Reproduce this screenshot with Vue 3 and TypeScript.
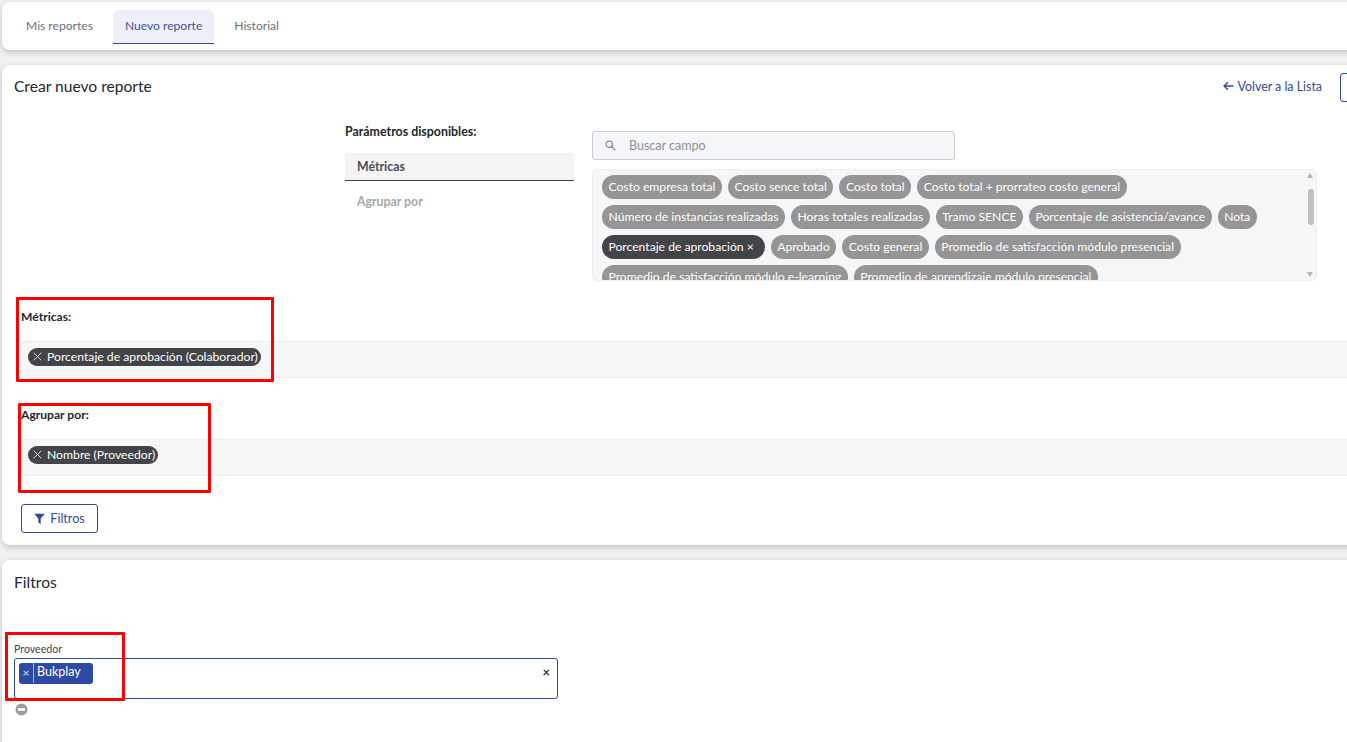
<script setup lang="ts">
const tabs: string[] = ['Mis reportes', 'Nuevo reporte', 'Historial']
const fields: { label: string; active?: boolean }[] = [
  { label: 'Costo empresa total' },
  { label: 'Costo sence total' },
  { label: 'Costo total' },
  { label: 'Costo total + prorrateo costo general' },
  { label: 'Número de instancias realizadas' },
  { label: 'Horas totales realizadas' },
  { label: 'Tramo SENCE' },
  { label: 'Porcentaje de asistencia/avance' },
  { label: 'Nota' },
  { label: 'Porcentaje de aprobación ×', active: true },
  { label: 'Aprobado' },
  { label: 'Costo general' },
  { label: 'Promedio de satisfacción módulo presencial' },
  { label: 'Promedio de satisfacción módulo e-learning' },
  { label: 'Promedio de aprendizaje módulo presencial' }
]
</script>

<template>
  <div class="page">
    <section class="card tabs-card">
      <a
        v-for="t in tabs"
        :key="t"
        class="tab"
        :class="{ 'tab-on': t === 'Nuevo reporte' }"
      >{{ t }}</a>
    </section>

    <section class="card main-card">
      <header class="head">
        <h2 class="title">Crear nuevo reporte</h2>
        <div class="head-actions">
          <a class="back">
            <svg width="11" height="10" viewBox="0 0 11 10" fill="none" stroke="#2e4aa5" stroke-width="1.4">
              <path d="M10.5 5H1.2M4.8 1.2 1.1 5l3.7 3.8" />
            </svg>
            Volver a la Lista
          </a>
          <span class="save"></span>
        </div>
      </header>

      <div class="params">
        <div class="params-nav">
          <div class="params-label">Parámetros disponibles:</div>
          <div class="nav-item nav-on">Métricas</div>
          <div class="nav-item">Agrupar por</div>
        </div>
        <div class="params-body">
          <div class="search">
            <svg width="11" height="11" viewBox="0 0 11 11" fill="none" stroke="#8b9097" stroke-width="1.3">
              <circle cx="4.3" cy="4.3" r="3.2" />
              <path d="M6.8 6.8 10.3 10.3" />
            </svg>
            <span>Buscar campo</span>
          </div>
          <div class="fields">
            <span
              v-for="f in fields"
              :key="f.label"
              class="field"
              :class="{ 'field-on': f.active }"
            >{{ f.label }}</span>
            <div class="scrollbar">
              <i class="arrow arrow-up"></i>
              <i class="thumb"></i>
              <i class="arrow arrow-down"></i>
            </div>
          </div>
        </div>
      </div>

      <div class="group group-first">
        <div class="group-label">Métricas:</div>
        <div class="bar">
          <span class="pill"><svg class="x" width="9" height="9" viewBox="0 0 9 9" stroke="#d8d8d8" stroke-width="1"><path d="M.7.7l7.6 7.6M8.3.7.7 8.3" /></svg>Porcentaje de aprobación (Colaborador)</span>
        </div>
      </div>
      <div class="group">
        <div class="group-label">Agrupar por:</div>
        <div class="bar">
          <span class="pill"><svg class="x" width="9" height="9" viewBox="0 0 9 9" stroke="#d8d8d8" stroke-width="1"><path d="M.7.7l7.6 7.6M8.3.7.7 8.3" /></svg>Nombre (Proveedor)</span>
        </div>
      </div>

      <button class="filter-btn">
        <svg width="11" height="11" viewBox="0 0 11 11" fill="#2e4aa5"><path d="M.3.8h10.4L6.7 5.4V11L4.3 9.4v-4z" /></svg>
        Filtros
      </button>
    </section>

    <section class="card filter-card">
      <h2 class="title">Filtros</h2>
      <label class="select-label">Proveedor</label>
      <div class="select">
        <span class="tag"><b class="tag-x">×</b><span class="tag-text">Bukplay</span></span>
        <span class="clear">×</span>
      </div>
      <svg class="minus" width="13" height="13" viewBox="0 0 13 13">
        <circle cx="6.5" cy="6.5" r="6" fill="#9a9ea3" />
        <rect x="3" y="5.2" width="7" height="2.6" fill="#fff" />
      </svg>
    </section>

    <div class="mark mark-a"></div>
    <div class="mark mark-b"></div>
    <div class="mark mark-c"></div>
  </div>
</template>

<style scoped>
.page {
  position: relative;
  width: 1347px;
  height: 742px;
  overflow: hidden;
  background: #f1f2f3;
  padding: 2px 0 0 2px;
  box-sizing: border-box;
  font-family: Lato, "Noto Sans", sans-serif;
  color: #2b3038;
}
.card {
  background: #fff;
  border-radius: 8px;
  box-shadow: 0 2px 6px rgba(0, 0, 0, 0.22);
  width: 1420px;
  box-sizing: border-box;
}
.tabs-card {
  height: 48px;
  display: flex;
  gap: 8px;
  padding: 8px 0 0 12px;
}
.tab {
  height: 34px;
  box-sizing: border-box;
  padding: 0 12px 3px;
  display: flex;
  align-items: center;
  font-size: 12.1px;
  color: #6c7077;
  border-radius: 6px 6px 0 0;
}
.tab-on {
  background: #edf0f8;
  color: #3f51a3;
  border-bottom: 1px solid #2e4aa5;
  padding-bottom: 2px;
}
.main-card {
  margin-top: 15px;
  height: 480px;
  padding: 0 0 0 12px;
}
.head {
  display: flex;
  justify-content: space-between;
  height: 42px;
  margin-bottom: 2px;
  align-items: center;
}
.title {
  margin: 0;
  font-size: 15.6px;
  font-weight: 400;
  color: #23272e;
}
.head-actions {
  display: flex;
  align-items: center;
  gap: 18px;
  flex: none;
  margin-right: 2px;
  white-space: nowrap;
}
.back {
  display: inline-flex;
  align-items: center;
  gap: 4px;
  font-size: 12.4px;
  color: #2e4aa5;
}
.save {
  height: 29px;
  width: 80px;
  flex: none;
  box-sizing: border-box;
  border: 1px solid #2e4aa5;
  border-radius: 3px;
  background: #fff;
  margin-top: 2px;
}
.params {
  display: flex;
  margin-left: 331px;
  gap: 18px;
  height: 187px;
  padding-top: 22px;
  box-sizing: border-box;
}
.params-nav {
  width: 229px;
  flex: none;
}
.params-label {
  font-size: 12.4px;
  font-weight: 700;
  line-height: 16px;
  margin-top: -7px;
  margin-bottom: 13px;
  color: #23272e;
}
.nav-item {
  height: 28px;
  box-sizing: border-box;
  padding: 0 12px 1px;
  display: flex;
  align-items: center;
  font-size: 12.3px;
  font-weight: 700;
  color: #a4a7ab;
  margin-bottom: 7px;
}
.nav-on {
  background: #f4f4f5;
  border-bottom: 1px solid #3c3f44;
  color: #4a4e55;
}
.params-body {
  width: 725px;
  flex: none;
}
.search {
  width: 363px;
  height: 29px;
  box-sizing: border-box;
  border: 1px solid #c9ccd1;
  border-radius: 3px;
  background: #f5f6f8;
  display: flex;
  align-items: center;
  gap: 13px;
  padding-left: 12px;
  font-size: 12.5px;
  color: #8b9097;
}
.fields {
  position: relative;
  margin-top: 9px;
  height: 112px;
  box-sizing: border-box;
  background: #f5f6f8;
  border: 1px solid #eceef0;
  border-radius: 5px;
  padding: 5px 20px 0 9px;
  overflow: hidden;
  display: flex;
  flex-wrap: wrap;
  align-content: flex-start;
  gap: 6px;
}
.field {
  height: 24px;
  line-height: 24px;
  padding: 0 6.5px;
  border-radius: 12px;
  background: #959595;
  color: #fff;
  font-size: 12.15px;
  white-space: nowrap;
}
.field-on {
  background: #424448;
  padding-right: 11px;
}
.scrollbar {
  position: absolute;
  top: 0;
  right: 2px;
  bottom: 0;
  width: 7px;
}
.arrow {
  position: absolute;
  left: 0;
  border-left: 3.5px solid transparent;
  border-right: 3.5px solid transparent;
}
.arrow-up {
  top: 3px;
  border-bottom: 5px solid #b4b5b7;
}
.arrow-down {
  bottom: 3px;
  border-top: 5px solid #b4b5b7;
}
.thumb {
  position: absolute;
  top: 19px;
  height: 36px;
  width: 6px;
  left: 0.5px;
  border-radius: 3px;
  background: #c0c1c3;
}
.group {
  padding: 0 0 0 7px;
}
.group-label {
  font-size: 12.1px;
  font-weight: 700;
  line-height: 16px;
  height: 32px;
  color: #23272e;
}
.group-first {
  margin-bottom: 29px;
  padding-top: 13px;
}
.bar {
  height: 37px;
  box-sizing: border-box;
  background: #f5f6f8;
  border: 1px solid #eceef0;
  border-radius: 4px;
  padding: 6px 6px 0;
  display: flex;
  align-items: flex-start;
}
.pill {
  height: 18px;
  box-sizing: border-box;
  padding: 0 3px 1px 5px;
  border-radius: 9px;
  background: #424448;
  color: #fff;
  font-size: 12.2px;
  display: inline-flex;
  align-items: center;
  gap: 5px;
  white-space: nowrap;
}
.filter-btn {
  display: flex;
  align-items: center;
  justify-content: center;
  gap: 5px;
  margin: 28px 0 0 7px;
  width: 77px;
  height: 29px;
  border: 1px solid #2e4aa5;
  border-radius: 3px;
  background: #fff;
  color: #2e4aa5;
  font: inherit;
  font-size: 12.5px;
}
.filter-card {
  margin-top: 15px;
  height: 220px;
  padding: 13px 0 0 12px;
}
.filter-card .title {
  line-height: 18px;
}
.select-label {
  display: block;
  margin-top: 51px;
  font-size: 10.6px;
  line-height: 14px;
  color: #3f444c;
}
.select {
  position: relative;
  margin-top: 2px;
  width: 544px;
  height: 41px;
  box-sizing: border-box;
  border: 1px solid #2e4aa5;
  border-radius: 3px;
  padding: 2px 4px;
}
.tag {
  display: inline-flex;
  height: 21px;
  width: 74px;
  box-sizing: border-box;
  background: #2e4aa5;
  border-radius: 3px;
  color: #fff;
  font-size: 12.5px;
  align-items: center;
}
.tag-x {
  width: 14px;
  text-align: center;
  color: #b9c4e6;
  font-weight: 700;
  font-size: 12px;
  border-right: 1px solid #a8b5dd;
  line-height: 20px;
}
.tag-text {
  padding: 0 0 3px 3px;
}
.clear {
  position: absolute;
  right: 7px;
  top: 6px;
  font-size: 13px;
  font-weight: 700;
  line-height: 14px;
  color: #333;
}
.minus {
  display: block;
  margin: 4px 0 0 1px;
}
.mark {
  position: absolute;
  border: 3px solid #f00;
  box-sizing: border-box;
  border-radius: 1px;
}
.mark-a {
  left: 16px;
  top: 297px;
  width: 258px;
  height: 85px;
}
.mark-b {
  left: 18px;
  top: 403px;
  width: 193px;
  height: 90px;
}
.mark-c {
  left: 5px;
  top: 632px;
  width: 120px;
  height: 69px;
}
</style>

<style>
html,
body {
  margin: 0;
  overflow: hidden;
}
</style>
